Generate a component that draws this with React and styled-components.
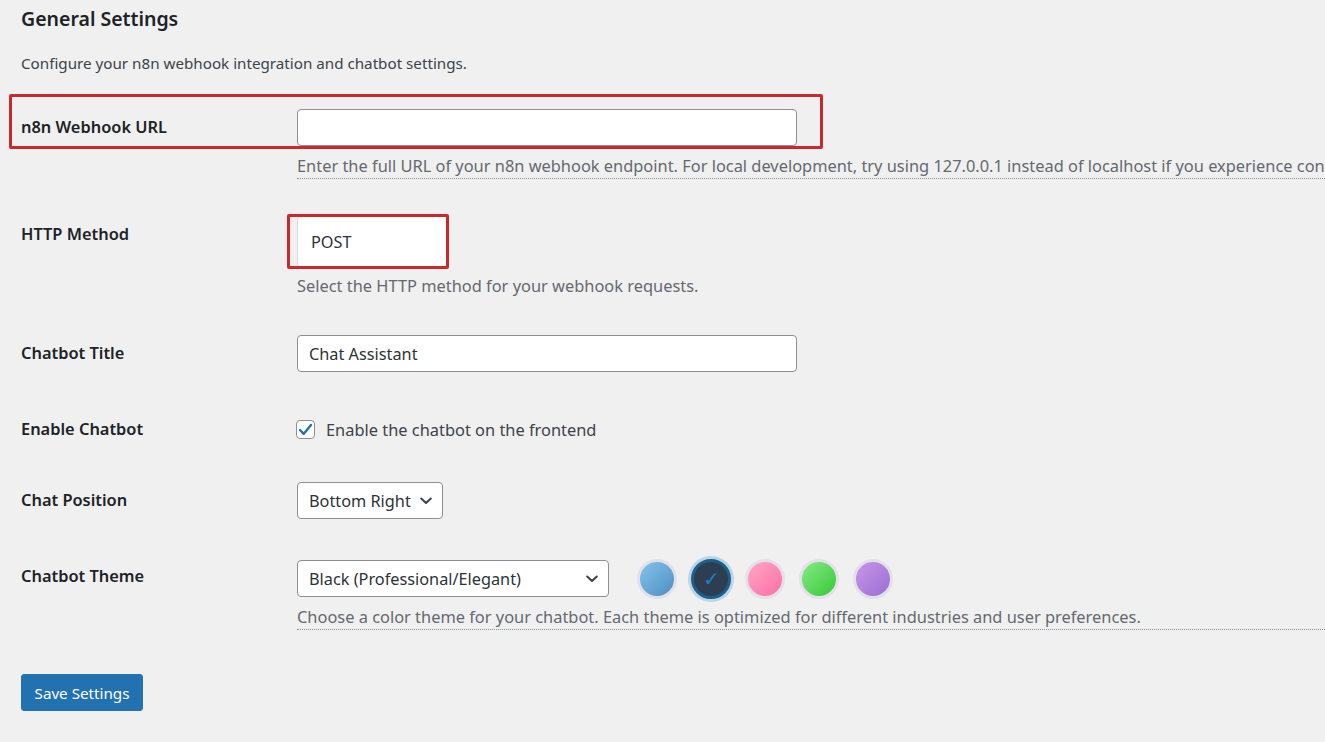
import React from "react";
import styled, { createGlobalStyle } from "styled-components";

const GlobalStyle = createGlobalStyle`
  html, body { margin: 0; padding: 0; }
  body {
    background: #f0f0f1;
    font-family: "Noto Sans", "Open Sans", "Liberation Sans", sans-serif;
    color: #1d2327;
    overflow: hidden;
  }
`;

const Page = styled.div`
  width: 1325px;
  height: 742px;
  box-sizing: border-box;
  padding: 6px 0 0 21px;
  overflow: hidden;
`;

const Heading = styled.h2`
  margin: 0;
  font-size: 19.5px;
  font-weight: 600;
  line-height: 26px;
  color: #1d2327;
`;

const Intro = styled.p`
  margin: 20px 0 0;
  font-size: 15.2px;
  line-height: 22px;
  color: #3c434a;
`;

const Form = styled.div`
  display: flex;
  flex-direction: column;
`;

const Row = styled.div`
  position: relative;
  display: grid;
  grid-template-columns: 276px 1fr;
  align-items: start;
  margin-top: ${(p) => p.$gap}px;
`;

const Label = styled.div`
  font-size: 16.4px;
  font-weight: 600;
  line-height: ${(p) => p.$lh || 36}px;
  color: #1d2327;
  white-space: nowrap;
`;

const Field = styled.div`
  display: flex;
  flex-direction: column;
  min-width: 0;
`;

const TextInput = styled.div`
  box-sizing: border-box;
  width: 500px;
  height: 37px;
  background: #fff;
  border: 1px solid #8c8f94;
  border-radius: 4px;
  padding: 0 11px;
  display: flex;
  align-items: center;
  font-size: 16.3px;
  color: #2c3338;
`;

const MethodBox = styled.div`
  box-sizing: border-box;
  width: 150px;
  height: 51px;
  background: #fff;
  border: 1px solid #dcdcde;
  border-radius: 3px;
  padding: 0 13px;
  display: flex;
  align-items: center;
  font-size: 16.3px;
  color: #2c3338;
`;

const SelectBox = styled.div`
  box-sizing: border-box;
  width: ${(p) => p.$w}px;
  height: 37px;
  background: #fff;
  border: 1px solid #8c8f94;
  border-radius: 4px;
  padding: 0 10px 0 11px;
  display: flex;
  align-items: center;
  justify-content: space-between;
  font-size: 16.3px;
  color: #2c3338;
  flex-shrink: 0;
  white-space: nowrap;
`;

const Description = styled.div`
  margin-top: ${(p) => p.$mt}px;
  font-size: 16.4px;
  line-height: 22px;
  color: #646970;
  white-space: nowrap;
  padding-bottom: 1px;
  border-bottom: ${(p) => (p.$dotted ? "1px dotted #8c8f94" : "1px solid transparent")};
  margin-right: -400px;
`;

const CheckRow = styled.label`
  height: 36px;
  display: flex;
  align-items: center;
  gap: 11px;
  font-size: 16.4px;
  color: #3c434a;
  white-space: nowrap;
`;

const CheckBox = styled.span`
  box-sizing: border-box;
  width: 19px;
  height: 19px;
  margin-left: -1px;
  background: #fff;
  border: 1px solid #8c8f94;
  border-radius: 4px;
  display: flex;
  align-items: center;
  justify-content: center;
`;

const ThemeRow = styled.div`
  display: flex;
  align-items: center;
  height: 37px;
`;

const Swatches = styled.div`
  display: flex;
  gap: 14px;
  margin-left: 28px;
`;

const Swatch = styled.div`
  box-sizing: border-box;
  width: 40px;
  height: 40px;
  border-radius: 50%;
  background: ${(p) => p.$bg};
  border: 3px solid ${(p) => (p.$active ? "#1d5f8c" : "#e4e0ea")};
  box-shadow: ${(p) => (p.$active ? "0 0 0 3px rgba(120, 180, 220, 0.45)" : "none")};
  display: flex;
  align-items: center;
  justify-content: center;
  color: #1f7cc4;
  font-size: 20px;
  line-height: 1;
`;

const SaveButton = styled.button`
  margin-top: 44px;
  width: 122px;
  height: 37px;
  background: #2271b1;
  border: 1px solid #2271b1;
  border-radius: 3px;
  color: #fff;
  font-family: inherit;
  font-size: 15.2px;
  padding: 0;
  cursor: pointer;
`;

const Callout = styled.span`
  position: absolute;
  left: ${(p) => p.$l}px;
  top: ${(p) => p.$t}px;
  width: ${(p) => p.$w}px;
  height: ${(p) => p.$h}px;
  border: 3px solid #c9282d;
  box-sizing: border-box;
  border-radius: 2px;
  pointer-events: none;
`;

const Chevron = () => (
  <svg width="12" height="8" viewBox="0 0 12 8" aria-hidden="true">
    <polyline points="1.2,1.5 6,6 10.8,1.5" fill="none" stroke="#3c434a" strokeWidth="2" strokeLinecap="round" strokeLinejoin="round" />
  </svg>
);

const Check = () => (
  <svg width="15" height="13" viewBox="0 0 15 13" aria-hidden="true">
    <polyline points="2,7 5.8,10.8 13,2" fill="none" stroke="#2271b1" strokeWidth="2.4" strokeLinecap="round" strokeLinejoin="round" />
  </svg>
);

const swatches = [
  { bg: "linear-gradient(135deg, #86c3ea 0%, #4b8fc2 100%)" },
  { bg: "#2c3e50", active: true },
  { bg: "linear-gradient(135deg, #ffa7c4 0%, #ff6ea6 100%)" },
  { bg: "linear-gradient(135deg, #86ea86 0%, #35c935 100%)" },
  { bg: "linear-gradient(135deg, #c896e6 0%, #9a6fd6 100%)" },
];

export default function App() {
  return (
    <>
      <GlobalStyle />
      <Page>
        <Heading>General Settings</Heading>
        <Intro>Configure your n8n webhook integration and chatbot settings.</Intro>
        <Form>
          <Row $gap={35}>
            <Callout $l={-12} $t={-15} $w={814} $h={55} />
            <Label>n8n Webhook URL</Label>
            <Field>
              <TextInput />
              <Description $mt={9} $dotted>
                Enter the full URL of your n8n webhook endpoint. For local development, try using 127.0.0.1 instead of localhost if you experience connection issues.
              </Description>
            </Field>
          </Row>

          <Row $gap={37}>
            <Callout $l={266} $t={-2} $w={162} $h={55} />
            <Label>HTTP Method</Label>
            <Field>
              <MethodBox>POST</MethodBox>
              <Description $mt={8}>Select the HTTP method for your webhook requests.</Description>
            </Field>
          </Row>

          <Row $gap={36}>
            <Label>Chatbot Title</Label>
            <Field>
              <TextInput>Chat Assistant</TextInput>
            </Field>
          </Row>

          <Row $gap={39}>
            <Label>Enable Chatbot</Label>
            <Field>
              <CheckRow>
                <CheckBox>
                  <Check />
                </CheckBox>
                Enable the chatbot on the frontend
              </CheckRow>
            </Field>
          </Row>

          <Row $gap={35}>
            <Label>Chat Position</Label>
            <Field>
              <SelectBox $w={146}>
                Bottom Right
                <Chevron />
              </SelectBox>
            </Field>
          </Row>

          <Row $gap={41}>
            <Label $lh={32}>Chatbot Theme</Label>
            <Field>
              <ThemeRow>
                <SelectBox $w={312}>
                  Black (Professional/Elegant)
                  <Chevron />
                </SelectBox>
                <Swatches>
                  {swatches.map((s, i) => (
                    <Swatch key={i} $bg={s.bg} $active={s.active}>
                      {s.active ? "✓" : null}
                    </Swatch>
                  ))}
                </Swatches>
              </ThemeRow>
              <Description $mt={9} $dotted>
                Choose a color theme for your chatbot. Each theme is optimized for different industries and user preferences.
              </Description>
            </Field>
          </Row>
        </Form>
        <SaveButton>Save Settings</SaveButton>
      </Page>
    </>
  );
}
